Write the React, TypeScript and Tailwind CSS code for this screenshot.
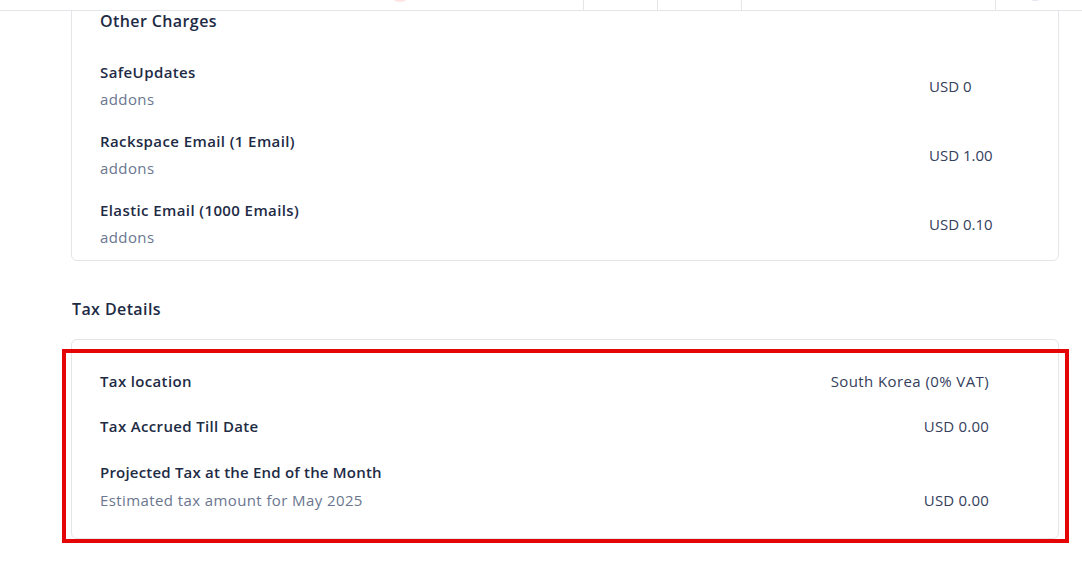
import React from "react";

type Charge = { name: string; type: string; price: string };

const charges: Charge[] = [
  { name: "SafeUpdates", type: "addons", price: "USD 0" },
  { name: "Rackspace Email (1 Email)", type: "addons", price: "USD 1.00" },
  { name: "Elastic Email (1000 Emails)", type: "addons", price: "USD 0.10" },
];

function TopBar() {
  return (
    <div className="absolute left-0 right-0 top-0 h-[11px] bg-white border-b border-[#e3e5e8] flex overflow-hidden z-10">
      <div className="relative w-[583px]">
        {/* avatar peeking from above */}
        <div className="absolute left-[388px] top-[-22px] w-6 h-6 rounded-full bg-[#fde4e4]" />
      </div>
      <div className="w-[74px] border-l border-[#e3e5e8]" />
      <div className="w-[84px] border-l border-[#e3e5e8]" />
      <div className="w-[254px] border-l border-[#e3e5e8]" />
      <div className="relative flex-1 border-l border-[#e3e5e8]">
        <div className="absolute left-[29px] top-[-19px] w-5 h-5 rounded-full bg-[#e4e4f6]" />
      </div>
    </div>
  );
}

export default function App() {
  return (
    <div className="relative w-[1082px] h-[573px] overflow-hidden bg-white font-['Open_Sans',sans-serif] text-[#1e2b45]">
      <TopBar />

      <div className="pl-[71px] pr-[23px] -mt-[20px]">
        {/* Other Charges card */}
        <div className="border border-[#e3e5e8] rounded-md pl-[28px] pr-[69px] pt-[28px] pb-[13px]">
          <h3 className="text-[16px] leading-6 font-semibold tracking-[0.4px]">Other Charges</h3>
          <div className="mt-[29px] flex flex-col gap-[22px]">
            {charges.map((c) => (
              <div key={c.name} className="flex items-center justify-between">
                <div className="flex flex-col gap-[7px]">
                  <span className="text-[15px] leading-5 font-semibold tracking-[0.4px]">{c.name}</span>
                  <span className="text-[15px] leading-5 text-[#6b7690] tracking-[0.4px]">{c.type}</span>
                </div>
                <span className="w-[60px] whitespace-nowrap text-[15px] leading-5 text-[#34405c]">{c.price}</span>
              </div>
            ))}
          </div>
        </div>

        {/* Tax details */}
        <h3 className="mt-[36px] pl-px text-[16px] leading-6 font-semibold tracking-[0.4px]">Tax Details</h3>
        <div className="mt-[18px] h-[200px] border border-[#e3e5e8] rounded-md pl-[28px] pr-[69px] pt-[31px]">
          <div className="flex items-center justify-between">
            <span className="text-[15px] leading-5 font-semibold tracking-[0.35px]">Tax location</span>
            <span className="text-[15px] leading-5 text-[#34405c] tracking-[0.4px]">South Korea (0% VAT)</span>
          </div>
          <div className="mt-[25px] flex items-center justify-between">
            <span className="text-[15px] leading-5 font-semibold tracking-[0.35px]">Tax Accrued Till Date</span>
            <span className="text-[15px] leading-5 text-[#34405c] tracking-[0.2px]">USD 0.00</span>
          </div>
          <div className="mt-[26px] flex items-end justify-between">
            <div className="flex flex-col gap-[8px]">
              <span className="text-[15px] leading-5 font-semibold tracking-[0.2px]">Projected Tax at the End of the Month</span>
              <span className="text-[15px] leading-5 text-[#6b7690] tracking-[0.4px]">Estimated tax amount for May 2025</span>
            </div>
            <span className="text-[15px] leading-5 text-[#34405c] tracking-[0.2px]">USD 0.00</span>
          </div>
        </div>
      </div>

      {/* highlight annotation */}
      <div className="absolute left-[62px] top-[349px] w-[1007px] h-[194px] border-4 border-[#e40606] pointer-events-none" />
    </div>
  );
}
